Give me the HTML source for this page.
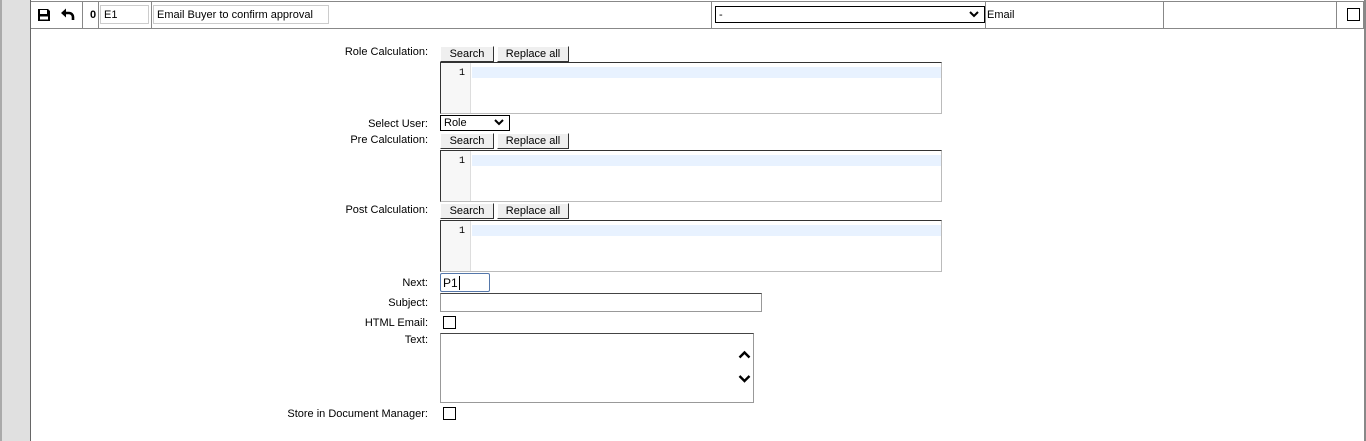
<!DOCTYPE html>
<html><head><style>
*{margin:0;padding:0;box-sizing:border-box}
body{width:1366px;height:441px;overflow:hidden;background:#fff;font-family:"Liberation Sans",Arial,sans-serif;font-size:11px;color:#000;position:relative}
.a{position:absolute}
.lbl{position:absolute;right:938px;text-align:right;white-space:nowrap}
.btn{position:absolute;height:16px;background:#efefef;border-right:1px solid #333;border-bottom:1px solid #333;border-top:1px solid #fff;border-left:1px solid #fff;font-size:11px;text-align:center;line-height:15px}
.ed{position:absolute;left:440px;width:502px;height:52px;border-top:1px solid #333;border-left:1px solid #333;border-right:1px solid #bbb;border-bottom:1px solid #bbb;background:#fff}
.gut{position:absolute;left:0;top:0;width:30px;height:100%;background:#f7f7f7;border-right:1px solid #ddd;font-family:"Liberation Mono",monospace;font-size:10px;text-align:right;padding-right:5px;padding-top:5px}
.hl{position:absolute;left:31px;right:0;top:4px;height:11px;background:#e8f2ff}
.cb{position:absolute;width:13px;height:13px;border:1px solid #000;background:#fff}
.inp{position:absolute;border:1px solid #999;border-top-color:#444;background:#fff}
</style></head><body>
<div class="a" style="left:0;top:0;width:31px;height:441px;background:#e0e0e0;border-left:2px solid #aaa;border-right:1px solid #666"></div>
<div class="a" style="left:31px;top:1px;width:1333px;height:28px;border-top:1px solid #888;border-bottom:1px solid #888;border-right:1px solid #888"></div>
<div class="a" style="left:1364px;top:0;width:2px;height:441px;background:#888"></div>
<div class="a" style="left:82px;top:1px;width:1px;height:28px;background:#888"></div>
<div class="a" style="left:98px;top:1px;width:1px;height:28px;background:#888"></div>
<div class="a" style="left:151px;top:1px;width:1px;height:28px;background:#888"></div>
<div class="a" style="left:711px;top:1px;width:1px;height:28px;background:#888"></div>
<div class="a" style="left:985px;top:1px;width:1px;height:28px;background:#888"></div>
<div class="a" style="left:1163px;top:1px;width:1px;height:28px;background:#888"></div>
<div class="a" style="left:1336px;top:1px;width:1px;height:28px;background:#888"></div>
<svg class="a" style="left:37px;top:8px" width="14" height="14" viewBox="0 0 14 14"><path d="M1 1h10l2 2v10H1z" fill="#000"/><rect x="3" y="2" width="7" height="4" fill="#fff"/><rect x="3" y="8.5" width="8" height="3" fill="#fff"/></svg>
<svg class="a" style="left:60px;top:8px" width="16" height="14" viewBox="0 0 16 14"><path d="M5 5h4a4 4 0 0 1 4 4v3" fill="none" stroke="#000" stroke-width="2.6"/><path d="M1 5l5-4.5v9z" fill="#000"/></svg>
<div class="a" style="left:90px;top:9px;font-weight:bold">0</div>
<div class="inp" style="left:100px;top:5px;width:49px;height:19px;border-color:#ccc;padding:3px 3px">E1</div>
<div class="inp" style="left:153px;top:5px;width:176px;height:19px;border-color:#ccc;padding:3px 3px">Email Buyer to confirm approval</div>
<div class="a" style="left:715px;top:6px;width:270px;height:17px;border:1px solid #000;padding:2px 3px">-</div>
<svg class="a" style="left:969px;top:11px" width="10" height="7"><path d="M1 1l4 4 4-4" fill="none" stroke="#000" stroke-width="2"/></svg>
<div class="a" style="left:987px;top:9px">Email</div>
<div class="cb" style="left:1347px;top:8px"></div>

<div class="lbl" style="top:46px">Role Calculation:</div>
<div class="btn" style="left:440px;top:46px;width:54px">Search</div>
<div class="btn" style="left:497px;top:46px;width:72px">Replace all</div>
<div class="ed" style="top:62px"><div class="gut">1</div><div class="hl"></div></div>

<div class="lbl" style="top:118px">Select User:</div>
<div class="a" style="left:440px;top:115px;width:70px;height:16px;border:1px solid #000;padding:0 3px;line-height:15px">Role</div>
<svg class="a" style="left:494px;top:119px" width="10" height="7"><path d="M1 1l4 4 4-4" fill="none" stroke="#000" stroke-width="2"/></svg>

<div class="lbl" style="top:134px">Pre Calculation:</div>
<div class="btn" style="left:440px;top:133px;width:54px">Search</div>
<div class="btn" style="left:497px;top:133px;width:72px">Replace all</div>
<div class="ed" style="top:150px"><div class="gut">1</div><div class="hl"></div></div>

<div class="lbl" style="top:204px">Post Calculation:</div>
<div class="btn" style="left:440px;top:203px;width:54px">Search</div>
<div class="btn" style="left:497px;top:203px;width:72px">Replace all</div>
<div class="ed" style="top:220px"><div class="gut">1</div><div class="hl"></div></div>

<div class="lbl" style="top:277px">Next:</div>
<div class="inp" style="left:440px;top:273px;width:50px;height:19px;border:1px solid #57a;border-radius:2px;padding:2px 2px;font-size:12px">P1<span style="border-left:1px solid #000;margin-left:1px"></span></div>
<div class="lbl" style="top:297px">Subject:</div>
<div class="inp" style="left:440px;top:293px;width:322px;height:19px"></div>
<div class="lbl" style="top:317px">HTML Email:</div>
<div class="cb" style="left:443px;top:316px"></div>
<div class="lbl" style="top:334px">Text:</div>
<div class="inp" style="left:440px;top:333px;width:314px;height:70px"></div>
<svg class="a" style="left:738px;top:350px" width="13" height="36"><path d="M1.5 7.5l5-5 5 5" fill="none" stroke="#000" stroke-width="2.4"/><path d="M1.5 26l5 5 5-5" fill="none" stroke="#000" stroke-width="2.4"/></svg>
<div class="lbl" style="top:408px">Store in Document Manager:</div>
<div class="cb" style="left:443px;top:407px"></div>
</body></html>
